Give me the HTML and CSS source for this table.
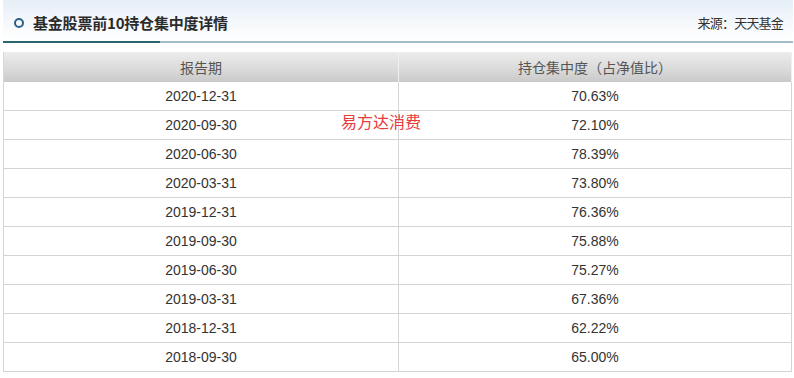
FILE: index.html
```html
<!DOCTYPE html>
<html>
<head>
<meta charset="utf-8">
<link rel="stylesheet" href="styles.css">
</head>
<body>
<div class="panel">
  <div class="titlebar">
    <div class="title"><span class="ring"></span><span class="title-text">基金股票前10持仓集中度详情</span></div>
    <div class="source">来源：天天基金</div>
  </div>
  <div class="table-wrap">
    <table class="grid">
      <thead>
        <tr><th>报告期</th><th>持仓集中度（占净值比）</th></tr>
      </thead>
      <tbody>
        <tr><td>2020-12-31</td><td>70.63%</td></tr>
        <tr><td>2020-09-30</td><td>72.10%</td></tr>
        <tr><td>2020-06-30</td><td>78.39%</td></tr>
        <tr><td>2020-03-31</td><td>73.80%</td></tr>
        <tr><td>2019-12-31</td><td>76.36%</td></tr>
        <tr><td>2019-09-30</td><td>75.88%</td></tr>
        <tr><td>2019-06-30</td><td>75.27%</td></tr>
        <tr><td>2019-03-31</td><td>67.36%</td></tr>
        <tr><td>2018-12-31</td><td>62.22%</td></tr>
        <tr><td>2018-09-30</td><td>65.00%</td></tr>
      </tbody>
    </table>
    <div class="stamp">易方达消费</div>
  </div>
</div>
</body>
</html>
```
FILE: styles.css
```css
html, body {
  margin: 0;
  padding: 0;
  background: #ffffff;
}
body {
  font-family: "Liberation Sans", Arial, "Noto Sans CJK SC", sans-serif;
  color: #333;
}
.panel {
  width: 790px;
  margin-left: 3px;
}
.titlebar {
  height: 41px;
  display: flex;
  align-items: center;
  justify-content: space-between;
  background: linear-gradient(to bottom, #e6eef7 0%, #f6f9fc 60%, #ffffff 100%);
  border-bottom: 2px solid #a3bccb;
  position: relative;
}
.titlebar::after {
  content: "";
  position: absolute;
  left: 0;
  bottom: -2px;
  width: 157px;
  height: 2px;
  background: #2a6670;
}
.title {
  display: flex;
  align-items: center;
  padding-left: 11px;
  padding-top: 4px;
}
.ring {
  width: 6px;
  height: 6px;
  border: 2px solid #2d5f86;
  border-radius: 50%;
  margin-right: 9px;
}
.title-text {
  font-family: "Noto Sans CJK SC", sans-serif;
  font-weight: bold;
  font-size: 15px;
  color: #2b2b2b;
  letter-spacing: -0.2px;
}
.source {
  font-family: "Noto Sans CJK SC", sans-serif;
  font-size: 13px;
  color: #333;
  padding-right: 10px;
  padding-top: 4px;
  letter-spacing: -0.8px;
}
.table-wrap {
  position: relative;
  margin-top: 9px;
}
.grid {
  width: 789px;
  border-collapse: collapse;
  table-layout: fixed;
}
.grid th {
  height: 30px;
  padding: 0;
  font-weight: normal;
  font-family: "Noto Sans CJK SC", sans-serif;
  font-size: 14px;
  color: #555;
  background: linear-gradient(to bottom, #ececec 0%, #d9d9d9 60%, #c9c9c9 100%);
  border-left: 1px solid #d8d8d8;
  border-right: 1px solid #f0f0f0;
}
.grid th:first-child {
  width: 394px;
}
.grid td {
  height: 28px;
  padding: 0;
  text-align: center;
  font-size: 14px;
  color: #333;
  border: 1px solid #d4d4d4;
  border-top: 0;
}
.stamp {
  position: absolute;
  left: 338px;
  top: 57px;
  font-family: "Noto Sans CJK SC", sans-serif;
  font-size: 16px;
  color: #e83a3a;
}
```
